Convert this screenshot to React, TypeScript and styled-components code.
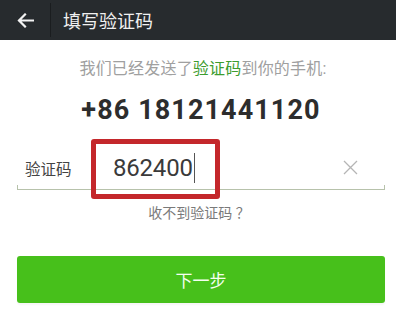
import React from 'react';
import styled, { createGlobalStyle } from 'styled-components';

const GlobalStyle = createGlobalStyle`
  html, body {
    margin: 0;
    padding: 0;
    background: #ffffff;
  }
  body {
    font-family: Roboto, 'Noto Sans CJK SC', sans-serif;
    width: 396px;
    height: 335px;
    overflow: hidden;
  }
`;

const App = () => {
  return (
    <>
      <GlobalStyle />
      <Page>
        <Header>
          <BackButton aria-label="back">
            <svg width="17" height="15" viewBox="0 0 17 15" fill="none">
              <path
                d="M16 7.5H2.2M8 1.5L2 7.5L8 13.5"
                stroke="#f2f2f2"
                strokeWidth="2.2"
                strokeLinecap="square"
              />
            </svg>
          </BackButton>
          <Divider />
          <Title>填写验证码</Title>
        </Header>
        <Body>
          <Hint>
            我们已经发送了<Green>验证码</Green>到你的手机:
          </Hint>
          <Phone>+86 18121441120</Phone>
          <InputRow>
            <Label>验证码</Label>
            <CodeValue>
              862400
              <Cursor />
            </CodeValue>
            <ClearButton aria-label="clear">
              <svg width="15" height="15" viewBox="0 0 15 15">
                <path d="M1 1L14 14M14 1L1 14" stroke="#b5b5b5" strokeWidth="1.3" />
              </svg>
            </ClearButton>
            <Highlight />
          </InputRow>
          <HelpLink>收不到验证码 ？</HelpLink>
          <NextButton>下一步</NextButton>
        </Body>
      </Page>
    </>
  );
};

export default App;

const Page = styled.div`
  width: 396px;
  height: 335px;
  background: #ffffff;
`;

const Header = styled.div`
  height: 40px;
  background-color: #272b2e;
  display: flex;
  align-items: center;
`;

const BackButton = styled.div`
  width: 50px;
  height: 40px;
  display: flex;
  align-items: center;
  padding-left: 17px;
  box-sizing: border-box;
`;

const Divider = styled.div`
  width: 1px;
  height: 34px;
  background-color: #1a1d1f;
`;

const Title = styled.div`
  margin-left: 12px;
  color: #f0f0f0;
  font-size: 18px;
`;

const Body = styled.div`
  padding: 0 11px 0 17px;
  display: flex;
  flex-direction: column;
`;

const Hint = styled.div`
  margin-top: 18px;
  text-align: center;
  color: #a0a0a0;
  font-size: 16px;
  line-height: 22px;
  letter-spacing: 0.2px;
  padding-left: 4px;
`;

const Green = styled.span`
  color: #3d9c2f;
`;

const Phone = styled.div`
  margin-top: 14px;
  text-align: center;
  color: #2d2d2d;
  font-size: 27px;
  font-weight: 700;
  letter-spacing: 1.1px;
  line-height: 32px;
`;

const InputRow = styled.div`
  position: relative;
  margin-top: 20px;
  height: 43px;
  display: flex;
  align-items: center;
  border-bottom: 1px solid #b7c2ab;

  &::before,
  &::after {
    content: '';
    position: absolute;
    bottom: 0;
    width: 1px;
    height: 4px;
    background-color: #b7c2ab;
  }
  &::before {
    left: 0;
  }
  &::after {
    right: 0;
  }
`;

const Label = styled.div`
  width: 96px;
  padding-left: 8px;
  box-sizing: border-box;
  color: #444444;
  font-size: 15.5px;
`;

const CodeValue = styled.div`
  flex: 1;
  display: flex;
  align-items: center;
  color: #3a3a3a;
  font-size: 24px;
  letter-spacing: -0.2px;
`;

const Cursor = styled.span`
  width: 1px;
  height: 30px;
  margin-left: 1px;
  background-color: #555555;
`;

const ClearButton = styled.div`
  width: 42px;
  display: flex;
  justify-content: flex-start;
  align-items: center;
`;

const Highlight = styled.div`
  position: absolute;
  left: 74px;
  top: -7px;
  width: 119px;
  height: 50px;
  border: 5px solid #c4272b;
  border-radius: 3px;
  pointer-events: none;
`;

const HelpLink = styled.div`
  margin-top: 12px;
  text-align: center;
  color: #7a7a7a;
  font-size: 14px;
  padding-right: 4px;
`;

const NextButton = styled.div`
  margin-top: 34px;
  height: 47px;
  border-radius: 3px;
  background-color: #47c01b;
  color: #f4fff0;
  font-size: 17px;
  display: flex;
  align-items: center;
  justify-content: center;
  box-shadow: 0 2px 2px rgba(0, 0, 0, 0.04);
`;
